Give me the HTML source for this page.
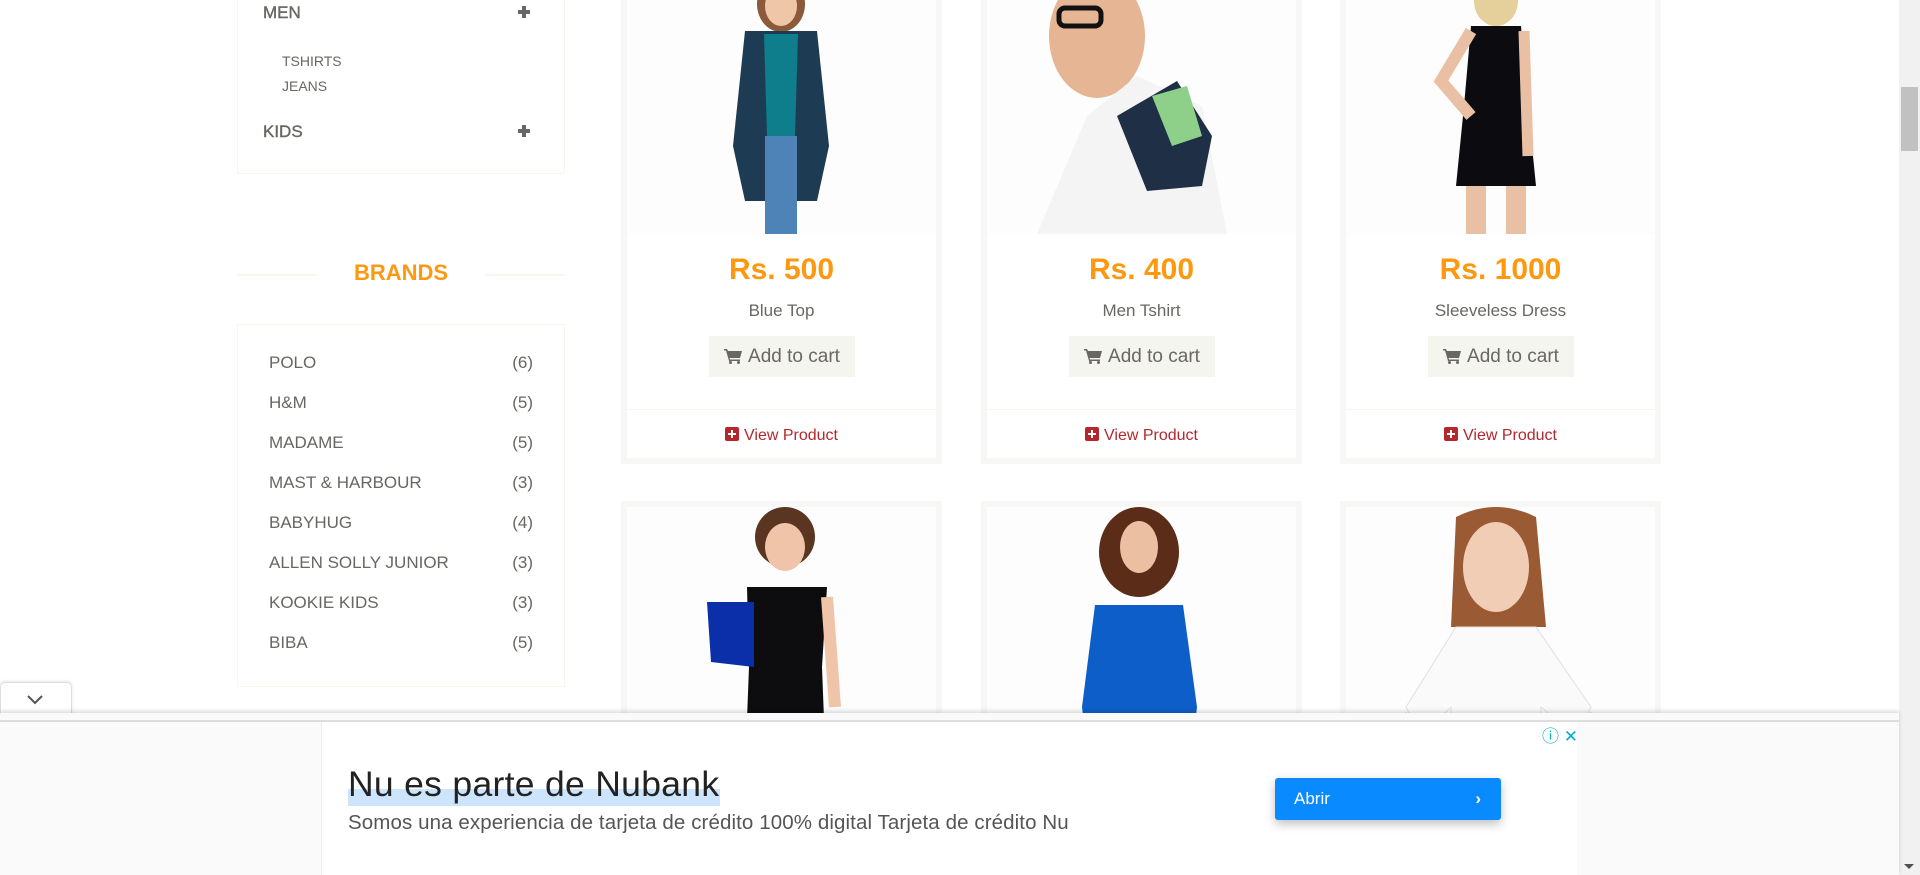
<!DOCTYPE html>
<html><head><meta charset="utf-8"><style>
*{box-sizing:border-box;margin:0;padding:0}
body{width:1920px;height:875px;overflow:hidden;background:#fff;font-family:"Liberation Sans",Roboto,sans-serif;position:relative;color:#696763}
.a{position:absolute}
.panel{position:absolute;border:1px solid #f7f7f0;background:#fff}
.cat{position:absolute;font-size:17px;color:#696763;text-transform:uppercase;-webkit-text-stroke:0.4px #696763}
.plus{position:absolute;width:12px;height:12px}
.plus:before{content:"";position:absolute;left:0;top:4px;width:12px;height:4px;background:#696763}
.plus:after{content:"";position:absolute;left:4px;top:0;width:4px;height:12px;background:#696763}
.sub{position:absolute;font-size:14px;color:#696763}
.brand{position:absolute;left:269px;font-size:17px;color:#696763;width:264px}
.brand span{position:absolute;right:0}
.card{position:absolute;width:321px;border:6px solid #f7f7f5;background:#fff}
.img{position:absolute;left:0;width:309px;background:#fdfdfd;overflow:hidden}
.price{position:absolute;width:309px;text-align:center;color:#FE980F;font-weight:bold;font-size:30px}
.name{position:absolute;width:309px;text-align:center;font-size:17px;color:#696763}
.btn{position:absolute;height:41px;background:#F5F5F0;color:#696763;font-size:19px;line-height:41px;text-align:center}
.btn svg{vertical-align:-2px;margin-right:6px}
.vp{position:absolute;width:309px;text-align:center;color:#B4282D;font-size:16px}
.hr{position:absolute;left:0;width:309px;height:1px;background:#f7f7f0}
.ic{display:inline-block;width:14px;height:14px;background:#B4282D;border-radius:2px;position:relative;vertical-align:-1px;margin-right:5px}
.ic:before{content:"";position:absolute;left:3px;top:6px;width:8px;height:2px;background:#fff}
.ic:after{content:"";position:absolute;left:6px;top:3px;width:2px;height:8px;background:#fff}
</style></head><body>

<div class="panel" style="left:237px;top:-5px;width:328px;height:179px"></div>
<div class="cat" style="left:263px;top:3px">MEN</div>
<div class="plus" style="left:518px;top:6px"></div>
<div class="sub" style="left:282px;top:53px">TSHIRTS</div>
<div class="sub" style="left:282px;top:78px">JEANS</div>
<div class="cat" style="left:263px;top:122px">KIDS</div>
<div class="plus" style="left:518px;top:125px"></div>

<div class="a" style="left:237px;top:274px;width:80px;height:2px;background:#f7f7f0"></div>
<div class="a" style="left:485px;top:274px;width:80px;height:2px;background:#f7f7f0"></div>
<div class="a" style="left:237px;top:260px;width:328px;text-align:center;color:#FE980F;font-weight:bold;font-size:22px">BRANDS</div>
<div class="panel" style="left:237px;top:324px;width:328px;height:363px"></div>
<div class="brand" style="top:353px">POLO<span>(6)</span></div>
<div class="brand" style="top:393px">H&amp;M<span>(5)</span></div>
<div class="brand" style="top:433px">MADAME<span>(5)</span></div>
<div class="brand" style="top:473px">MAST &amp; HARBOUR<span>(3)</span></div>
<div class="brand" style="top:513px">BABYHUG<span>(4)</span></div>
<div class="brand" style="top:553px">ALLEN SOLLY JUNIOR<span>(3)</span></div>
<div class="brand" style="top:593px">KOOKIE KIDS<span>(3)</span></div>
<div class="brand" style="top:633px">BIBA<span>(5)</span></div>

<div class="card" style="left:621px;top:-20px;height:484px">
 <div class="img" style="top:0;height:248px"><svg width="309" height="248">
  <ellipse cx="154" cy="18" rx="24" ry="28" fill="#8a5a3a"/><ellipse cx="154" cy="20" rx="16" ry="20" fill="#f0c6a8"/>
  <path d="M118 45 L190 45 L202 160 L190 215 L118 215 L106 160Z" fill="#1d3b52"/>
  <path d="M137 48 L171 48 L168 150 L140 150Z" fill="#0f7e8c"/>
  <rect x="138" y="150" width="32" height="98" fill="#4e83b8"/>
 </svg></div>
 <div class="price" style="top:267px">Rs. 500</div>
 <div class="name" style="top:315px">Blue Top</div>
 <div class="btn" style="left:82px;top:350px;width:146px"><svg width="18" height="16" viewBox="0 0 18 16"><path d="M0 1 H3 L4 3 H18 L16 10 H5.5 L6 11.5 H16 V13 H5 L2 2.5 H0Z" fill="#696763"/><circle cx="6.5" cy="14.5" r="1.5" fill="#696763"/><circle cx="14.5" cy="14.5" r="1.5" fill="#696763"/></svg>Add to cart</div>
 <div class="hr" style="top:423px"></div>
 <div class="vp" style="top:441px"><span class="ic"></span>View Product</div>
</div>

<div class="card" style="left:981px;top:-20px;height:484px">
 <div class="img" style="top:0;height:248px"><svg width="309" height="248">
  <ellipse cx="110" cy="50" rx="48" ry="62" fill="#e6b594"/>
  <rect x="72" y="22" width="42" height="18" rx="6" fill="none" stroke="#111" stroke-width="5"/>
  <path d="M50 248 L100 130 L150 90 L215 120 L240 248Z" fill="#f4f4f4"/>
  <path d="M130 130 L190 95 L225 150 L215 200 L160 205Z" fill="#1e2f46"/>
  <path d="M165 110 L200 100 L215 150 L185 160Z" fill="#8ed08a"/>
 </svg></div>
 <div class="price" style="top:267px">Rs. 400</div>
 <div class="name" style="top:315px">Men Tshirt</div>
 <div class="btn" style="left:82px;top:350px;width:146px"><svg width="18" height="16" viewBox="0 0 18 16"><path d="M0 1 H3 L4 3 H18 L16 10 H5.5 L6 11.5 H16 V13 H5 L2 2.5 H0Z" fill="#696763"/><circle cx="6.5" cy="14.5" r="1.5" fill="#696763"/><circle cx="14.5" cy="14.5" r="1.5" fill="#696763"/></svg>Add to cart</div>
 <div class="hr" style="top:423px"></div>
 <div class="vp" style="top:441px"><span class="ic"></span>View Product</div>
</div>

<div class="card" style="left:1340px;top:-20px;height:484px">
 <div class="img" style="top:0;height:248px"><svg width="309" height="248">
  <ellipse cx="150" cy="15" rx="22" ry="25" fill="#e5cf9a"/>
  <path d="M125 40 L175 40 L182 120 L190 200 L110 200 L118 120Z" fill="#0c0c10"/>
  <rect x="120" y="200" width="20" height="48" fill="#eac0a4"/><rect x="160" y="200" width="20" height="48" fill="#eac0a4"/>
  <path d="M125 45 L95 95 L125 130" stroke="#eac0a4" stroke-width="12" fill="none"/>
  <path d="M178 45 L182 170" stroke="#eac0a4" stroke-width="11" fill="none"/>
 </svg></div>
 <div class="price" style="top:267px">Rs. 1000</div>
 <div class="name" style="top:315px">Sleeveless Dress</div>
 <div class="btn" style="left:82px;top:350px;width:146px"><svg width="18" height="16" viewBox="0 0 18 16"><path d="M0 1 H3 L4 3 H18 L16 10 H5.5 L6 11.5 H16 V13 H5 L2 2.5 H0Z" fill="#696763"/><circle cx="6.5" cy="14.5" r="1.5" fill="#696763"/><circle cx="14.5" cy="14.5" r="1.5" fill="#696763"/></svg>Add to cart</div>
 <div class="hr" style="top:423px"></div>
 <div class="vp" style="top:441px"><span class="ic"></span>View Product</div>
</div>

<div class="card" style="left:621px;top:501px;height:300px">
 <div class="img" style="top:0;height:290px"><svg width="309" height="290">
  <ellipse cx="158" cy="30" rx="30" ry="30" fill="#5a3522"/><ellipse cx="158" cy="40" rx="20" ry="24" fill="#efc4a8"/>
  <path d="M120 80 L200 80 L195 160 L200 290 L117 290 L122 160Z" fill="#0d0d0f"/>
  <path d="M80 95 L127 95 L127 160 L84 155Z" fill="#0b2fa8"/>
  <path d="M200 90 L208 200" stroke="#efc4a8" stroke-width="12"/>
 </svg></div>
</div>
<div class="card" style="left:981px;top:501px;height:300px">
 <div class="img" style="top:0;height:290px"><svg width="309" height="290">
  <ellipse cx="152" cy="45" rx="40" ry="45" fill="#5b2c18"/><ellipse cx="152" cy="40" rx="19" ry="26" fill="#ebbfa1"/>
  <path d="M108 98 L196 98 L210 200 L200 290 L105 290 L95 200Z" fill="#0e5ec9"/>
 </svg></div>
</div>
<div class="card" style="left:1340px;top:501px;height:300px">
 <div class="img" style="top:0;height:290px"><svg width="309" height="290">
  <path d="M110 10 Q150 -10 190 10 L200 120 L105 120Z" fill="#9a5a33"/><ellipse cx="150" cy="60" rx="33" ry="45" fill="#f1cdb6"/>
  <path d="M60 200 L110 120 L190 120 L245 200 L230 230 L195 200 L195 290 L105 290 L105 200 L75 230Z" fill="#fafafa" stroke="#e0e0e0"/>
  <path d="M20 290 L60 205 L75 230 L45 290Z" fill="#e6b08a"/><path d="M290 290 L245 205 L230 230 L260 290Z" fill="#e6b08a"/>
 </svg></div>
</div>

<div class="a" style="left:1899px;top:0;width:21px;height:875px;background:#f1f1f1"></div>
<div class="a" style="left:1901px;top:87px;width:17px;height:64px;background:#c1c1c1"></div>
<div class="a" style="left:1904px;top:864px;width:0;height:0;border-left:5px solid transparent;border-right:5px solid transparent;border-top:5px solid #505050"></div>

<div class="a" style="left:0;top:682px;width:72px;height:34px;background:#fff;border:1px solid #ddd;border-bottom:none;border-radius:5px 5px 0 0;box-shadow:0 -1px 3px rgba(0,0,0,.1)"></div>
<svg class="a" style="left:26px;top:694px" width="18" height="12"><path d="M2 2 L9 9 L16 2" stroke="#555" stroke-width="2" fill="none"/></svg>
<div class="a" style="left:0;top:713px;width:1899px;height:162px;background:#fafafa;box-shadow:0 -2px 4px rgba(0,0,0,.15)"></div>
<div class="a" style="left:0;top:720px;width:1899px;height:2px;background:#ddd"></div>
<div class="a" style="left:321px;top:722px;width:1256px;height:153px;background:#fff;border-left:1px solid #eee"></div>
<div class="a" style="left:1542px;top:722px;color:#00aecd;font-size:17px">ⓘ ✕</div>
<div class="a" style="left:348px;top:789px;width:372px;height:17px;background:#cde5fc"></div>
<div class="a" style="left:348px;top:764px;font-size:35.5px;color:#222;letter-spacing:0.3px">Nu es parte de Nubank</div>
<div class="a" style="left:348px;top:811px;font-size:20.5px;color:#555;letter-spacing:0.1px">Somos una experiencia de tarjeta de crédito 100% digital Tarjeta de crédito Nu</div>
<div class="a" style="left:1275px;top:778px;width:226px;height:42px;background:#0a8aff;border-radius:3px;box-shadow:0 4px 10px rgba(0,0,0,.25);color:#fff;font-size:17px;line-height:42px;padding-left:19px">Abrir<span style="position:absolute;right:20px;font-weight:bold">›</span></div>
</body></html>
